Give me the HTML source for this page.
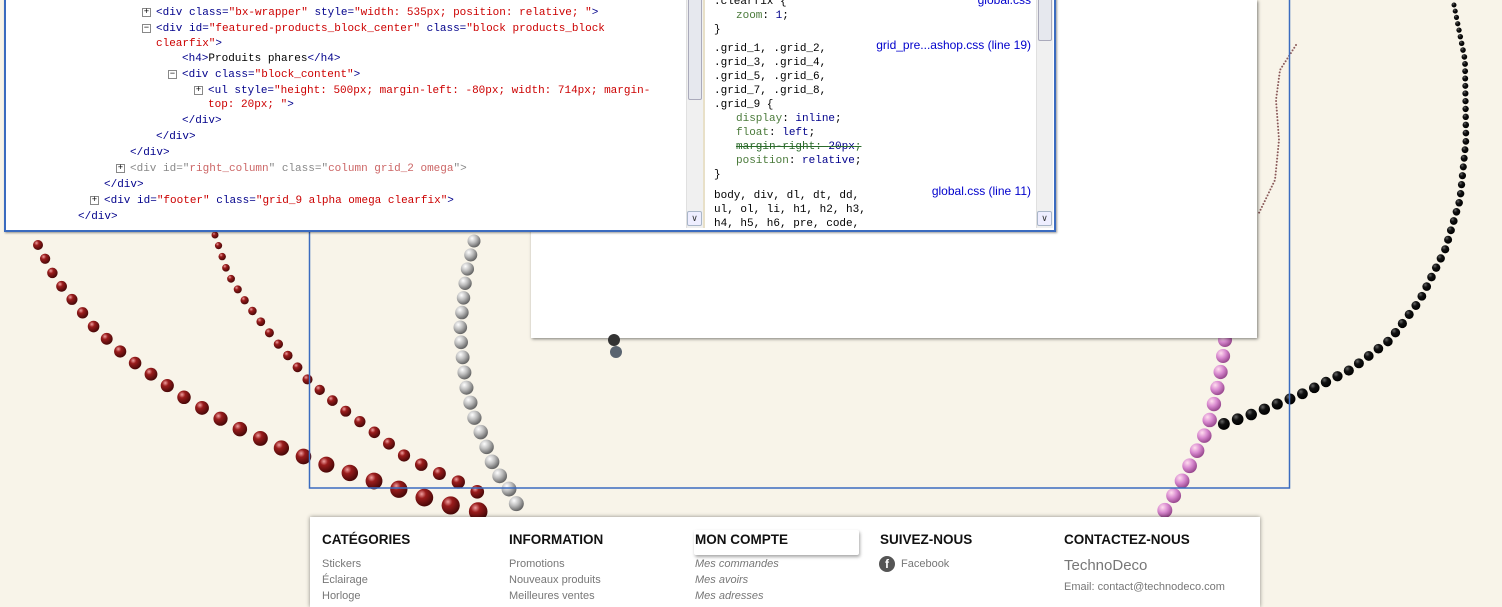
<!DOCTYPE html>
<html><head><meta charset="utf-8"><style>
*{margin:0;padding:0;box-sizing:border-box}
body{width:1502px;height:598px;overflow:hidden;background:#f8f4e9;position:relative;font-family:"Liberation Sans",sans-serif}
#beads{position:absolute;left:0;top:0}
.abs{position:absolute}
.code{font-family:"Liberation Mono",monospace;font-size:11px;white-space:pre;color:#000}
.t{color:#00008b}.a{color:#00008b}.v{color:#c00}.g{color:#888}
.box{position:absolute;width:9px;height:9px;border:1px solid #888;background:#fff;font-size:9px;line-height:7px;text-align:center;color:#000;font-family:"Liberation Mono",monospace}
.sb{position:absolute;width:17px;background:#f0f0f0;border-left:1px solid #e0e0e0}
.arr{position:absolute;width:15px;height:15px;border:1px solid #a9b6c8;border-radius:2px;background:#eef;font-size:9px;text-align:center;line-height:13px;color:#333}
.p{color:#4a7a3a}.pv{color:#00008b}
.lnk{position:absolute;color:#0000cc;font-size:12px;font-family:"Liberation Sans",sans-serif;text-align:right;width:300px}
.fh{position:absolute;top:532px;font-size:13.5px;font-weight:bold;color:#111}
.fl{position:absolute;font-size:11px;color:#777;line-height:16px}
</style></head><body>
<svg id="beads" width="1502" height="598"><defs>
<radialGradient id="gr" cx="35%" cy="30%" r="70%"><stop offset="0" stop-color="#f0a0a0"/><stop offset=".35" stop-color="#9a1c1c"/><stop offset="1" stop-color="#4a0808"/></radialGradient>
<radialGradient id="gg" cx="35%" cy="30%" r="70%"><stop offset="0" stop-color="#fff"/><stop offset=".5" stop-color="#bbb"/><stop offset="1" stop-color="#666"/></radialGradient>
<radialGradient id="gp" cx="35%" cy="30%" r="70%"><stop offset="0" stop-color="#fde"/><stop offset=".5" stop-color="#d98ad0"/><stop offset="1" stop-color="#9a4a90"/></radialGradient>
<radialGradient id="gk" cx="35%" cy="30%" r="70%"><stop offset="0" stop-color="#666"/><stop offset=".4" stop-color="#111"/><stop offset="1" stop-color="#000"/></radialGradient>
</defs><g id="bg"></g></svg>
<svg class="abs" style="left:0;top:0" width="1502" height="598">
<rect x="309.5" y="-5" width="980" height="493" fill="none" stroke="#3b6bbf" stroke-width="1.5"/>
</svg>
<div class="abs" style="left:531px;top:0;width:726px;height:338px;background:#fff;box-shadow:1px 1px 3px rgba(0,0,0,.5)"></div>
<svg class="abs" style="left:0;top:0" width="1502" height="598"><circle cx="614" cy="340" r="6" fill="#333"/><circle cx="616" cy="352" r="6" fill="#5a6470"/></svg>

<div class="abs" style="left:4px;top:-4px;width:1052px;height:236px;border:2px solid #3b6bbf;border-top:none;background:#fff;box-shadow:1px 1px 2px rgba(0,0,0,.4)">
 <div class="sb" style="left:680px;top:0;height:232px"><div style="position:absolute;left:1px;top:0;width:14px;height:104px;background:#e6e8ee;border:1px solid #aab;border-radius:2px"></div><div class="arr" style="left:0;top:215px">&#8744;</div></div>
 <div class="abs" style="left:697px;top:0;width:2px;height:232px;background:#e8e0c8"></div>
 <div class="sb" style="left:1030px;top:0;height:232px"><div style="position:absolute;left:1px;top:0;width:14px;height:45px;background:#e6e8ee;border:1px solid #aab;border-radius:2px"></div><div class="arr" style="left:0;top:215px">&#8744;</div></div>
</div>
<div class="code abs" style="left:0;top:0;line-height:16px">
<div class="box" style="left:142px;top:8px">+</div><div class="abs" style="left:156px;top:5px"><span class="t">&lt;div</span> <span class="a">class=</span><span class="v">"bx-wrapper"</span> <span class="a">style=</span><span class="v">"width: 535px; position: relative; "</span><span class="t">&gt;</span></div>
<div class="box" style="left:142px;top:24px">−</div><div class="abs" style="left:156px;top:21px"><span class="t">&lt;div</span> <span class="a">id=</span><span class="v">"featured-products_block_center"</span> <span class="a">class=</span><span class="v">"block products_block</span></div>
<div class="abs" style="left:156px;top:36px"><span class="v">clearfix"</span><span class="t">&gt;</span></div>
<div class="abs" style="left:182px;top:51px"><span class="t">&lt;h4&gt;</span>Produits phares<span class="t">&lt;/h4&gt;</span></div>
<div class="box" style="left:168px;top:70px">−</div><div class="abs" style="left:182px;top:67px"><span class="t">&lt;div</span> <span class="a">class=</span><span class="v">"block_content"</span><span class="t">&gt;</span></div>
<div class="box" style="left:194px;top:86px">+</div><div class="abs" style="left:208px;top:83px"><span class="t">&lt;ul</span> <span class="a">style=</span><span class="v">"height: 500px; margin-left: -80px; width: 714px; margin-</span></div>
<div class="abs" style="left:208px;top:97px"><span class="v">top: 20px; "</span><span class="t">&gt;</span></div>
<div class="abs t" style="left:182px;top:113px">&lt;/div&gt;</div>
<div class="abs t" style="left:156px;top:129px">&lt;/div&gt;</div>
<div class="abs t" style="left:130px;top:145px">&lt;/div&gt;</div>
<div class="box" style="left:116px;top:164px">+</div><div class="abs g" style="left:130px;top:161px">&lt;div id="<span style="color:#c66">right_column</span>" class="<span style="color:#c66">column grid_2 omega</span>"&gt;</div>
<div class="abs t" style="left:104px;top:177px">&lt;/div&gt;</div>
<div class="box" style="left:90px;top:196px">+</div><div class="abs" style="left:104px;top:193px"><span class="t">&lt;div</span> <span class="a">id=</span><span class="v">"footer"</span> <span class="a">class=</span><span class="v">"grid_9 alpha omega clearfix"</span><span class="t">&gt;</span></div>
<div class="abs t" style="left:78px;top:209px">&lt;/div&gt;</div>
</div>
<div class="code abs" style="left:714px;top:0;width:320px;height:228px;overflow:hidden;line-height:14px">
<div class="abs" style="left:0;top:-5px">.clearfix {</div>
<div class="abs" style="left:22px;top:9px"><span class="p">zoom</span>: <span class="pv">1</span>;</div>
<div class="abs" style="left:0;top:23px">}</div>
<div class="abs" style="left:0;top:42px">.grid_1, .grid_2,<br>.grid_3, .grid_4,<br>.grid_5, .grid_6,<br>.grid_7, .grid_8,<br>.grid_9 {</div>
<div class="abs" style="left:22px;top:112px"><span class="p">display</span>: <span class="pv">inline</span>;<br><span class="p">float</span>: <span class="pv">left</span>;<br><s style="color:#2a6a2a">margin-right: <span class="pv">20px</span>;</s><br><span class="p">position</span>: <span class="pv">relative</span>;</div>
<div class="abs" style="left:0;top:168px">}</div>
<div class="abs" style="left:0;top:189px">body, div, dl, dt, dd,<br>ul, ol, li, h1, h2, h3,<br>h4, h5, h6, pre, code,</div>
</div>
<div class="lnk" style="left:731px;top:-7px">global.css</div>
<div class="lnk" style="left:731px;top:38px">grid_pre...ashop.css (line 19)</div>
<div class="lnk" style="left:731px;top:184px">global.css (line 11)</div>

<div class="abs" style="left:310px;top:517px;width:950px;height:90px;background:#fff;box-shadow:0 0 4px rgba(0,0,0,.45)"></div>
<div class="abs" style="left:694px;top:530px;width:165px;height:25px;box-shadow:1px 2px 3px rgba(0,0,0,.35);background:#fff;border-radius:2px"></div>
<div class="fh" style="left:322px">CATÉGORIES</div>
<div class="fh" style="left:509px">INFORMATION</div>
<div class="fh" style="left:695px">MON COMPTE</div>
<div class="fh" style="left:880px">SUIVEZ-NOUS</div>
<div class="fh" style="left:1064px">CONTACTEZ-NOUS</div>
<div class="fl" style="left:322px;top:556px">Stickers<br>Éclairage<br>Horloge</div>
<div class="fl" style="left:509px;top:556px">Promotions<br>Nouveaux produits<br>Meilleures ventes</div>
<div class="fl" style="left:695px;top:556px;font-style:italic">Mes commandes<br>Mes avoirs<br>Mes adresses</div>
<div class="abs" style="left:879px;top:556px;width:16px;height:16px;border-radius:50%;background:#555;color:#fff;font-size:12px;font-weight:bold;text-align:center;line-height:17px">f</div>
<div class="fl" style="left:901px;top:556px">Facebook</div>
<div class="abs" style="left:1064px;top:557px;font-size:15px;color:#777">TechnoDeco</div>
<div class="fl" style="left:1064px;top:579px">Email: contact@technodeco.com</div>

<script>
var g=document.getElementById('bg'),ns='http://www.w3.org/2000/svg';
function strand(pts,r0,r1,fill,gap){
 var L=[0];for(var i=1;i<pts.length;i++){var dx=pts[i][0]-pts[i-1][0],dy=pts[i][1]-pts[i-1][1];L.push(L[i-1]+Math.hypot(dx,dy));}
 var T=L[L.length-1],s=0;
 while(s<=T){var t=s/T,r=r0+(r1-r0)*t,j=1;while(j<L.length-1&&L[j]<s)j++;
  var f=(s-L[j-1])/(L[j]-L[j-1]||1),x=pts[j-1][0]+(pts[j][0]-pts[j-1][0])*f,y=pts[j-1][1]+(pts[j][1]-pts[j-1][1])*f;
  var c=document.createElementNS(ns,'circle');c.setAttribute('cx',x);c.setAttribute('cy',y);c.setAttribute('r',r);c.setAttribute('fill',fill);g.appendChild(c);
  s+=r*2*gap+0.01;}
}
strand([[38,245],[55,278],[93,326],[125,356],[185,398],[233,426],[288,451],[350,473],[419,496],[456,507],[500,516]],5,9.5,'url(#gr)',1.55);
strand([[215,235],[228,274],[247,304],[275,340],[308,380],[340,407],[374,432],[406,457],[436,472],[465,485],[492,500]],3.5,7,'url(#gr)',1.6);
strand([[474,241],[466,275],[460,330],[462,352],[466,386],[475,420],[483,437],[495,470],[507,485],[517,505]],6.5,7.5,'url(#gg)',1.1);
strand([[1225,340],[1222,365],[1215,400],[1207,430],[1195,455],[1180,485],[1162,515]],7,7.5,'url(#gp)',1.15);
strand([[1454,5],[1465,60],[1466,140],[1460,200],[1445,250],[1420,300],[1390,340],[1350,370],[1300,395],[1250,415],[1212,428]],2.5,6,'url(#gk)',1.25);
strand([[1296,45],[1280,70],[1276,100],[1279,140],[1275,180],[1258,215]],1,1,'#8a5a5a',1.6);
</script>
</body></html>
